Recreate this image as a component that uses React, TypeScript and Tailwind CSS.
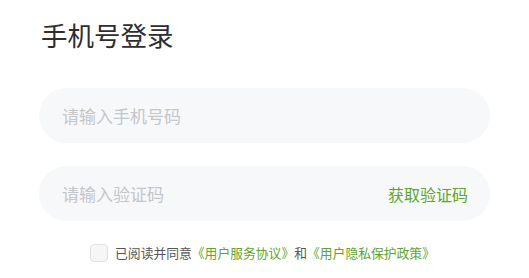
import React, { useState } from 'react';

const font = { fontFamily: '"Noto Sans CJK SC", "Noto Sans", sans-serif' };

export default function App() {
  const [agreed, setAgreed] = useState(false);

  return (
    <div className="w-[529px] h-[278px] bg-white px-[39px] pt-[16px]" style={font}>
      <h1 className="text-[26.5px] leading-[38px] text-[#2e2e2e] pl-[2px] font-normal">手机号登录</h1>

      <div className="mt-[34px] h-[55px] rounded-full bg-[#f7f8fa] flex items-center px-[23px]">
        <input
          className="flex-1 bg-transparent outline-none text-[17px] text-[#333] placeholder:text-[#c4c6ca]"
          placeholder="请输入手机号码"
        />
      </div>

      <div className="mt-[23px] h-[55px] rounded-full bg-[#f7f8fa] flex items-center pl-[23px] pr-[22px]">
        <input
          className="flex-1 bg-transparent outline-none text-[17px] text-[#333] placeholder:text-[#c4c6ca]"
          placeholder="请输入验证码"
        />
        <button className="text-[16px] text-[#5da52c]">获取验证码</button>
      </div>

      <label className="mt-[22px] flex items-center justify-center gap-[7px] text-[12.8px] text-[#555555] pr-[4px]">
        <button
          onClick={() => setAgreed(!agreed)}
          className="w-[18px] h-[18px] rounded-[4px] border border-[#e2e2e2] bg-[#f6f6f6]"
        />
        <span>
          已阅读并同意<span className="text-[#5da52c]">《用户服务协议》</span>和<span className="text-[#5da52c]">《用户隐私保护政策》</span>
        </span>
      </label>
    </div>
  );
}
